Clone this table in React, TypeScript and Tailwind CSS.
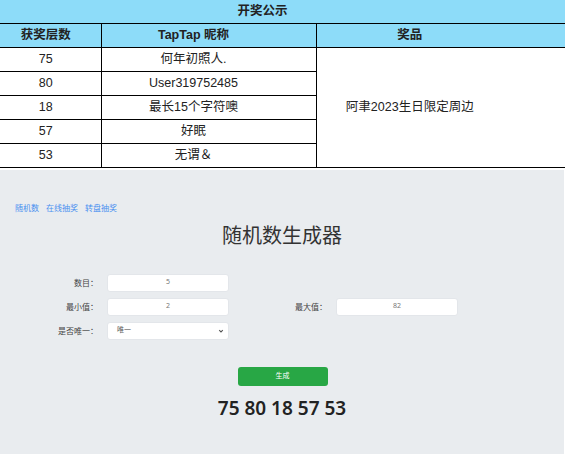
const winners = [
  { floor: "75", name: "何年初照人." },
  { floor: "80", name: "User319752485" },
  { floor: "18", name: "最长15个字符噢" },
  { floor: "57", name: "好眠" },
  { floor: "53", name: "无谓＆" },
];

const cjk = { fontFamily: '"Liberation Sans", "Noto Sans CJK SC", sans-serif' };
const ui = { fontFamily: '"Noto Sans", "Noto Sans CJK SC", sans-serif' };

function Field({ label, value }: { label: string; value: string }) {
  return (
    <div className="flex items-center">
      <span className="w-[100px] text-right text-[8px] text-[#444] pr-[2px]">{label}</span>
      <div className="ml-[7px] w-[122px] h-[18px] rounded-[3px] bg-white border border-[#e3e6ea] flex items-center justify-center text-[7px] text-[#777]">
        {value}
      </div>
    </div>
  );
}

export default function App() {
  return (
    <div className="w-[565px] h-[454px] bg-white overflow-hidden">
      {/* text sits a bit left of each cell's centre in the original */}
      <table className="w-full border-collapse text-[12.5px] text-[#222]" style={cjk}>
        <thead>
          <tr className="bg-[#8ddcf9]">
            <th colSpan={3} className="h-[23px] p-0 pr-[40px] font-bold border-b border-black">
              开奖公示
            </th>
          </tr>
          <tr className="bg-[#8ddcf9]">
            <th className="w-[101px] h-[24px] p-0 pr-[9px] font-bold border-b border-r border-black">获奖层数</th>
            <th className="w-[215px] p-0 pr-[30px] font-bold border-b border-r border-black">TapTap 昵称</th>
            <th className="p-0 pr-[62px] font-bold border-b border-black">奖品</th>
          </tr>
        </thead>
        <tbody>
          {winners.map((w, i) => (
            <tr key={w.floor}>
              <td className="h-[24px] p-0 pr-[9px] text-center border-b border-r border-black">{w.floor}</td>
              <td className="p-0 pr-[30px] text-center border-b border-r border-black">{w.name}</td>
              {i === 0 && (
                <td rowSpan={5} className="p-0 pr-[62px] text-center border-b border-black">
                  阿聿2023生日限定周边
                </td>
              )}
            </tr>
          ))}
        </tbody>
      </table>

      <div className="mt-[2px] w-[564px] h-[285px] bg-[#e9ecef] flex flex-col" style={ui}>
        <div className="mt-[32px] pl-[15px] flex gap-[7px] text-[8px] text-[#4a90f0]">
          <span>随机数</span>
          <span>在线抽奖</span>
          <span>转盘抽奖</span>
        </div>
        <h1 className="mt-[8px] text-center text-[20px] leading-[28px] text-[#333]">随机数生成器</h1>
        <div className="mt-[24px] flex flex-col gap-[6px]">
          <Field label="数目：" value="5" />
          <div className="flex items-center">
            <Field label="最小值：" value="2" />
            <Field label="最大值：" value="82" />
          </div>
          <div className="flex items-center">
            <span className="w-[100px] text-right text-[8px] text-[#444] pr-[2px]">是否唯一：</span>
            <div className="ml-[7px] w-[122px] h-[18px] rounded-[3px] bg-white border border-[#e3e6ea] flex items-center justify-between pl-[9px] pr-[4px] text-[7px] text-[#555]">
              <span>唯一</span>
              <svg width="6" height="6" viewBox="0 0 10 10" fill="none" stroke="#555" strokeWidth="1.8">
                <path d="M2 3.5 L5 6.5 L8 3.5" />
              </svg>
            </div>
          </div>
        </div>
        <div className="mt-[27px] flex justify-center">
          <div className="ml-[1px] w-[90px] h-[19px] rounded-[3px] bg-[#28a745] flex items-center justify-center text-[7px] text-white">
            生成
          </div>
        </div>
        <div className="mt-[9px] text-center text-[19px] leading-[26px] font-semibold text-[#222]">
          75 80 18 57 53
        </div>
      </div>
    </div>
  );
}
